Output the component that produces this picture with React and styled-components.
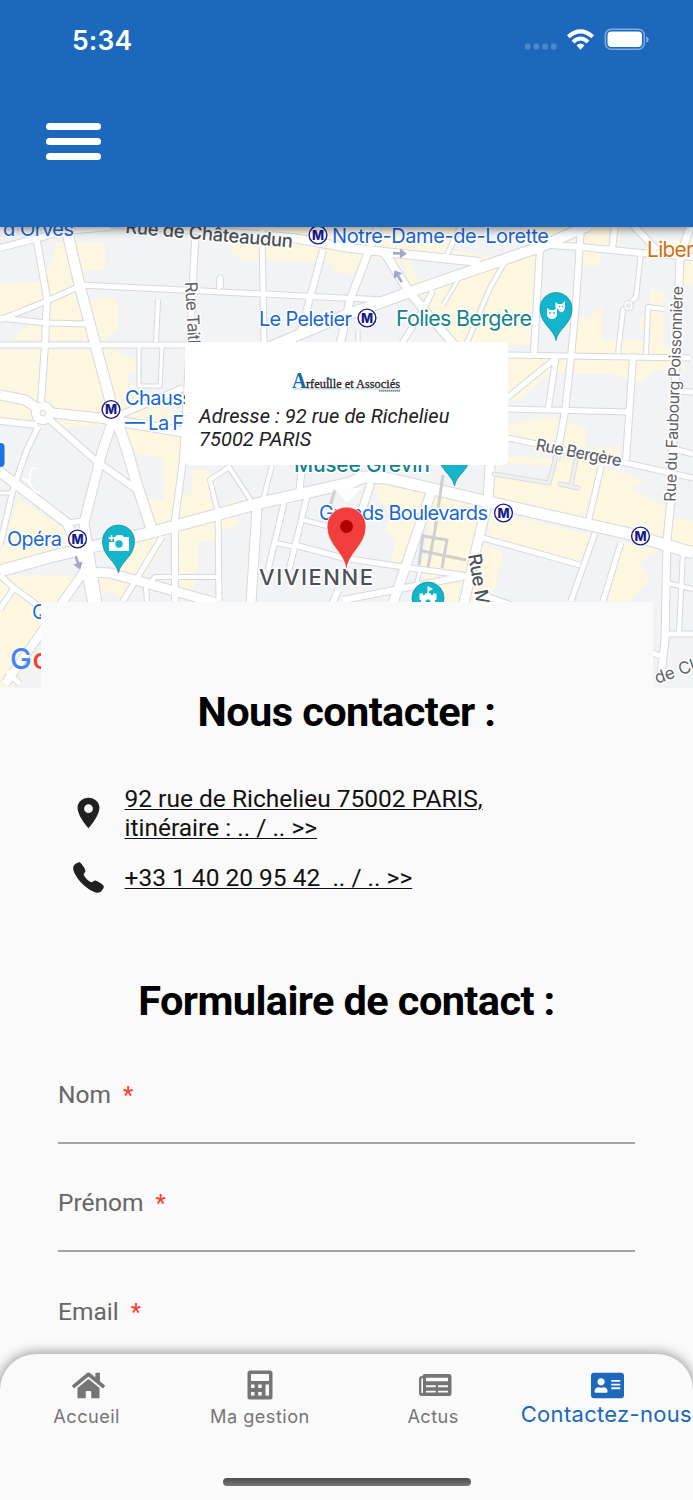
import styled, { createGlobalStyle } from "styled-components";
import { FaHome, FaCalculator, FaAddressCard } from "react-icons/fa";
import { IoLocationSharp, IoCall } from "react-icons/io5";

const GlobalStyle = createGlobalStyle`
  * {
    box-sizing: border-box;
  }
  body {
    margin: 0;
    background: #fafafa;
    font-family: Roboto, sans-serif;
  }
`;

const Screen = styled.div`
  display: flex;
  flex-direction: column;
  width: 693px;
  height: 1500px;
  overflow: hidden;
  background: #fafafa;
`;

const Header = styled.header`
  position: relative;
  z-index: 2;
  flex: none;
  height: 227px;
  background: #1b68bc;
  box-shadow: 0 2px 9px rgba(0, 0, 0, 0.5);
`;

const StatusBar = styled.div`
  display: flex;
  justify-content: space-between;
  align-items: center;
  height: 80px;
  padding: 0 44px 0 72px;
`;

const Clock = styled.span`
  font: 600 26.5px/32px Inter, sans-serif;
  letter-spacing: 0.2px;
  color: #fff;
`;

const MenuButton = styled.button`
  display: flex;
  flex-direction: column;
  gap: 8px;
  margin: 43px 0 0 46px;
  padding: 0;
  border: 0;
  background: none;
`;

const MenuBar = styled.span`
  width: 55px;
  height: 7px;
  border-radius: 4px;
  background: #fff;
`;

const Content = styled.main`
  flex: 1;
  min-height: 0;
  overflow: hidden;
`;

const MapBox = styled.section`
  position: relative;
  height: 461px;

  & > svg {
    display: block;
  }
`;

const Callout = styled.div`
  position: absolute;
  left: 185px;
  top: 115px;
  width: 323px;
  height: 123px;
  padding: 28px 14px 0;
  border-radius: 5px;
  background: #fff;
`;

const CalloutLogo = styled.div`
  display: flex;
  justify-content: center;
  height: 35px;
`;

const CalloutText = styled.p`
  margin: 0;
  font-size: 20px;
  font-style: italic;
  line-height: 23px;
  letter-spacing: 0.06px;
  color: #212121;
`;

const Sheet = styled.section`
  position: relative;
  width: 612px;
  margin: -86px auto 0 41px;
  padding: 85px 18px 0 17px;
  background: #fafafa;
`;

const Title = styled.h2`
  margin: 0;
  font-size: 41.5px;
  font-weight: 700;
  line-height: 50px;
  letter-spacing: -0.6px;
  text-align: center;
  color: #000;
`;

const ContactList = styled.div`
  display: flex;
  flex-direction: column;
  gap: 18px;
  margin: 46.5px 0 80.5px;
`;

const ContactRow = styled.div`
  display: flex;
  align-items: center;
  gap: 18.5px;
  padding-left: 13px;
  color: #212121;
`;

const ContactIcon = styled.span`
  display: flex;
  justify-content: center;
  flex: none;
  width: 35px;
`;

const ContactLink = styled.a`
  font-size: 24.5px;
  line-height: 29.3px;
  color: #111;
  white-space: pre;
  text-decoration: underline;
  text-decoration-thickness: 1.3px;
  text-underline-offset: 2px;
`;

const Fields = styled.div`
  padding-top: 54px;
`;

const Field = styled.label`
  display: block;
  height: 64px;
  margin-bottom: 44.5px;
  border-bottom: 2px solid #a3a3a3;
  font-size: 24.5px;
  line-height: 30px;
  color: #666;
`;

const Required = styled.span`
  margin-left: 12px;
  font-size: 23px;
  font-weight: 500;
  color: #f44336;
`;

const TabBar = styled.nav`
  position: relative;
  z-index: 2;
  flex: none;
  height: 146px;
  border-radius: 36px 36px 0 0;
  background: #fafafa;
  box-shadow: 0 0 13px rgba(0, 0, 0, 0.5);
`;

const Tabs = styled.div`
  display: grid;
  grid-template-columns: repeat(4, 173.25px);
  height: 124px;
  padding-top: 15px;
`;

const Tab = styled.div`
  display: flex;
  flex-direction: column;
  align-items: center;
  color: ${(p) => (p.$active ? "#1b68bc" : "#757575")};
  font: 375 ${(p) => (p.$active ? 22 : 18.2)}px/26px Inter, sans-serif;
  letter-spacing: ${(p) => (p.$active ? "0.3px" : "0.45px")};
  white-space: nowrap;
`;

const TabIcon = styled.span`
  display: flex;
  align-items: center;
  height: 32px;
  padding-left: ${(p) => p.$shift || 0}px;
`;

const TabLabel = styled.span`
  margin-top: ${(p) => (p.$active ? "-0.5px" : "2px")};
`;

const HomeIndicator = styled.div`
  width: 248px;
  height: 8px;
  margin: 0 auto;
  border-radius: 4px;
  background: linear-gradient(#4d4d4d, #777);
`;

const blocks = [
  "M55 243H105V270H84L88 300 113 297 117 303V330L105 340H12L20 332 35 322V300L0 320V284L40 282 52 262Z",
  "M0 350H118V352L135 360V372H129L128 385H138V400L183 415V460L140 455 110 425 60 427 0 422Z",
  "M231 227H350L365 246V265L350 274 333 271V262L240 260V255H231Z",
  "M345 227H620V245L600 247V265L583 267V246H540L530 330V345H460L420 300 410 293 405 265 343 250Z",
  "M340 305L350 312 341 323Z",
  "M18 498L67 530 78 555 0 572V553Z",
  "M0 575L80 576 38 628 14 688H0Z",
  "M145 452H183L175 515 157 527 148 500 164 500 163 460Z",
  "M130 545L165 534 160 552 125 601 110 590 92 600 82 575 120 568Z",
  "M193 470L200 467 216 477V510L235 498 238 525 217 532V542H198V560L192 600H176V575H192V590H176V515L182 495H191Z",
  "M508 355H540V352H571L575 320 590 317 603 305V340H640L684 353V370H655L640 383 612 374H548L520 400H508Z",
  "M508 425L548 417 586 427V450L600 447H620V460L600 455 560 450 508 438Z",
  "M377 483L431 495 400 570 391 562 396 540 386 530 393 510 377 500Z",
  "M432 495L485 506 465 601H412L425 555Z",
  "M491 455L605 462 588 520 490 500Z",
  "M604 468L645 480 630 490 668 508V518L693 521V548L588 523Z",
  "M484 510L660 550 640 562 649 580 630 601H608L621 541 595 535 583 570 530 550 490 535Z",
  "M480 542L503 553 495 590 480 601H467Z",
  "M670 240H693V285H679Z",
  "M650 289L663 292V353H648V330H640V318H650Z",
];

// grey courtyards cut out of the yellow blocks
const greyBlocks = [
  "M0 320L47 301 45 318 30 322 0 318Z",
  "M410 257L470 264 440 278 416 279Z",
  "M455 227H520L540 240 500 258 450 250Z",
  "M540 249H573V320L538 328Z",
  "M414 300L432 294 425 310 412 345H405Z",
  "M500 462L550 466 548 482 495 476Z",
  "M490 540L580 567 568 601H500L480 594 495 590 503 553Z",
];

const roads = [
  [4, "M158 300L156 342"],
  [3, "M139 347V386H160L162 347"],
  [3.5, "M221 288V279Q221 275 219 279V289"],
  [6, "M36 236L47 298 45 345 41 402"],
  [6, "M0 248L38 238 65 231 110 227"],
  [5, "M80 285L183 290 343 298 386 300"],
  [5, "M0 320L47 301 80 286"],
  [5, "M0 318L47 323 88 324"],
  [5, "M0 345H190"],
  [6, "M195 240L190 345 183 460 175 520V601"],
  [5, "M262 230L264 342"],
  [6, "M323 250L300 335"],
  [7, "M378 227L350 300 340 345"],
  [5, "M433 290L423 310 401 345"],
  [3, "M458 280L443 305"],
  [4, "M506 260L490 288 466 345"],
  [4, "M460 227L446 257"],
  [3, "M358 330V345"],
  [6, "M540 247L534 353"],
  [6, "M581 227L576 303 571 357 565 412 556 460"],
  [6, "M550 245L581 247 641 253 693 257"],
  [6, "M615 225L612 249"],
  [6, "M630 222L657 250"],
  [4, "M641 253L636 297 623 310 618 353"],
  [7, "M690 227L680 257 671 500 667 540 665 640 660 682"],
  [5, "M508 355L690 358"],
  [5, "M556 358L508 397"],
  [5, "M556 358L548 410"],
  [5, "M508 409L630 412"],
  [6, "M633 358L626 460"],
  [4, "M646 354L648 307 664 309"],
  [5, "M508 438L626 463 693 478"],
  [5, "M676 391L693 392"],
  [5, "M674 449L693 454"],
  [6, "M0 421L37 425"],
  [5, "M38 427L26 452 13 490 0 545"],
  [6, "M50 420L95 460 137 490"],
  [6, "M120 415L183 388"],
  [3, "M0 493H13"],
  [5, "M67 523L82 521"],
  [5, "M0 575L14 588 40 607"],
  [5, "M14 588L0 609"],
  [5, "M162 537L123 601"],
  [4, "M217 577H155L146 588 147 601"],
  [5, "M218 513L219 601"],
  [4, "M218 513L210 480 229 467 252 502"],
  [4, "M272 465L263 500"],
  [6, "M302 465L299 495"],
  [5, "M284 503L268 570"],
  [5, "M307 497L289 570"],
  [4, "M304 520L350 532"],
  [4, "M276 543L295 547"],
  [5, "M295 545L343 558 410 568 463 575"],
  [6, "M343 600L466 576"],
  [6, "M338 590L332 605"],
  [7, "M371 483L362 510"],
  [3, "M420 570L415 590"],
  [5, "M601 467L588 523"],
  [5, "M595 533L571 601"],
  [5, "M621 543L603 601"],
  [5, "M483 538L580 565"],
  [5, "M483 595L515 606"],
  [4, "M667 583L693 589"],
  [4, "M683 552L679 632"],
  [5, "M665 634H693"],
  [5, "M650 652L662 657"],
  [5, "M7 672L20 684"],
  [10, "M65 222L80 287 112 407 127 450 138 488 153 533"],
  [8, "M100 222L293 238 350 248 393 253 480 262"],
  [10, "M590 225L540 247 410 292 343 316 270 347"],
  [8, "M383 250L410 293 456 347"],
  [9, "M0 395L25 400 43 412 100 418 183 432"],
  [9, "M113 420L102 452 84 523 97 603"],
  [9, "M0 472L67 523 85 565 93 603"],
  [8, "M83 573L5 684"],
  [9, "M80 572L110 573 217 603"],
  [9, "M257 508L251 603"],
  [9, "M431 493L393 603"],
  [9, "M491 450L488 500 476 550 464 603"],
  [11, "M0 571L50 557 153 532 260 503 350 483 363 477 386 478 493 503 626 533 693 553"],
];

const passages = [
  "M443 475L435 530 428 567",
  "M423 536L447 540 442 568",
  "M423 534L419 565",
  "M422 551L466 560",
  "M335 490L330 506",
];

// faint service lanes
const lanes = [
  "M494 474L549 483 556 456",
  "M576 460L571 485M560 484L578 488",
];

const stations = [
  [318, 235],
  [367, 318],
  [111, 409.5],
  [77.5, 539],
  [503.5, 513],
  [640.5, 536],
];

const labels = [
  { x: 3, y: 235.5, w: 71, text: "d'Orves", color: "#1967d2" },
  { x: 332, y: 242.5, w: 217, text: "Notre-Dame-de-Lorette", color: "#1967d2" },
  { x: 259, y: 326, w: 93, text: "Le Peletier", color: "#1967d2" },
  { x: 396, y: 325.5, w: 136, text: "Folies Bergère", color: "#12838a", size: 21.5 },
  { x: 125, y: 404.5, w: 90, text: "Chaussée", color: "#1967d2" },
  { x: 125, y: 429.5, w: 59, text: "— La F", color: "#1967d2" },
  { x: 7, y: 546, w: 55, text: "Opéra", color: "#1967d2" },
  { x: 294, y: 471.5, w: 136, text: "Musée Grévin", color: "#12838a", size: 21, weight: 500 },
  { x: 319, y: 520, w: 169, text: "Grands Boulevards", color: "#1967d2" },
  { x: 647, y: 257, w: 47, text: "Liber", color: "#d56e0c", size: 21 },
  { x: 32, y: 619, w: 60, text: "Quatre", color: "#1967d2" },
  { x: 259, y: 585, w: 114, text: "VIVIENNE", color: "#4b5157", size: 22, weight: 500 },
  { x: 125, y: 233, w: 168, text: "Rue de Châteaudun", color: "#4b5157", rotate: 5, size: 18.5, weight: 500 },
  { x: 185, y: 282, w: 78, text: "Rue Taitbo", color: "#5f6368", rotate: 87, size: 17 },
  { x: 535, y: 450, w: 87, text: "Rue Bergère", color: "#5f6368", rotate: 11, size: 16.5, weight: 500 },
  { x: 675.5, y: 502, w: 216, text: "Rue du Faubourg Poissonnière", color: "#5f6368", rotate: -88, size: 16 },
  { x: 468, y: 555, w: 80, text: "Rue Mont", color: "#4b5157", rotate: 80, size: 18.5, weight: 500 },
  { x: 657, y: 684, w: 68, text: "de Cléry", color: "#5f6368", rotate: -20, size: 17 },
];

const PIN = "M0 24C-2 12 -16 8 -16 -8A16 16 0 0 1 16 -8C16 8 2 12 0 24Z";
const ARROW = "M-7 -1.3H0V-5L7 0 0 5V1.3H-7Z";

const Label = ({ x, y, w, text, color, size = 20, weight = 400, rotate = 0 }) => (
  <text
    x={x}
    y={y}
    textLength={w}
    fontFamily="Inter, sans-serif"
    fontSize={size}
    fontWeight={weight}
    fill={color}
    stroke="#fff"
    strokeWidth="3"
    strokeLinejoin="round"
    paintOrder="stroke"
    transform={`rotate(${rotate} ${x} ${y})`}
  >
    {text}
  </text>
);

const Station = ({ x, y }) => (
  <g transform={`translate(${x} ${y})`}>
    <circle r="10.5" fill="#fff" />
    <circle r="8.9" fill="#fff" stroke="#1a1a8c" strokeWidth="1.4" />
    <text
      y="4.7"
      textAnchor="middle"
      fontFamily="Inter, sans-serif"
      fontSize="12.8"
      fontWeight="800"
      fill="#1a1a8c"
    >
      M
    </text>
  </g>
);

const StreetMap = () => (
  <svg width="693" height="461" viewBox="0 227 693 461">
    <rect y="227" width="693" height="461" fill="#f1f3f4" />
    {blocks.map((d) => (
      <path key={d} d={d} fill="#fef7e0" />
    ))}
    {greyBlocks.map((d) => (
      <path key={d} d={d} fill="#f1f3f4" />
    ))}
    <g fill="none" stroke="#d6d8df" strokeLinejoin="round">
      {roads.map(([w, d]) => (
        <path key={d} d={d} strokeWidth={w + 2} />
      ))}
      <circle cx="43" cy="413" r="7" strokeWidth="10" />
    </g>
    <g fill="none" stroke="#fff" strokeLinejoin="round">
      {roads.map(([w, d]) => (
        <path key={d} d={d} strokeWidth={w} />
      ))}
      <circle cx="43" cy="413" r="7" strokeWidth="8" />
    </g>
    <circle cx="43" cy="413" r="3" fill="#fef7e0" stroke="#d9dbe0" />
    <rect x="624" y="301" width="9" height="9" rx="2" fill="#fff" stroke="#d9dbe0" />
    <rect x="627" y="304" width="3" height="3" fill="#fef7e0" stroke="#d9dbe0" />
    <g fill="none" stroke="#cfcfcf" strokeWidth="3">
      {passages.map((d) => (
        <path key={d} d={d} />
      ))}
    </g>
    <g fill="none" strokeLinecap="round">
      {lanes.map((d) => (
        <path key={d} d={d} stroke="#d9dbe0" strokeWidth="5" />
      ))}
      {lanes.map((d) => (
        <path key={d} d={d} stroke="#eff0f2" strokeWidth="3" />
      ))}
    </g>
    <path
      d="M36 468L31 469 29 482 34 491 40 493M22 478L29 481"
      fill="none"
      stroke="#fff"
      strokeWidth="2"
    />
    {/* one-way arrows */}
    <g fill="#a3a9cb">
      <path d={ARROW} transform="translate(400 253.5) rotate(3)" />
      <path d={ARROW} transform="translate(398 276) rotate(-122)" />
      <path d={ARROW} transform="translate(78 563) rotate(72)" />
    </g>
    <rect x="-15" y="443" width="19.5" height="24" rx="4" fill="#1a73e8" />
    {labels.map((l) => (
      <Label key={l.text} {...l} />
    ))}
    {stations.map(([x, y]) => (
      <Station key={x} x={x} y={y} />
    ))}
    <g fill="#12b5cb" stroke="#12939f" strokeWidth="0.8">
      <path d={PIN} transform="translate(556 316.5)" />
      <path d={PIN} transform="translate(118.5 549)" />
      <path d={PIN} transform="translate(454.5 462)" />
      <circle cx="428" cy="598" r="16" />
    </g>
    {/* theatre masks */}
    <g fill="#fff">
      <path d="M555.5 302L558 304H562L565 301V308Q564 313 560 312L558 309 555.5 308Z" />
      <path d="M547 308L550 310H554L557 308V315Q556 319 552 319T547 315Z" />
    </g>
    <g fill="#12b5cb">
      <circle cx="550" cy="313" r="0.9" />
      <circle cx="554" cy="313" r="0.9" />
      <circle cx="559.5" cy="306.5" r="0.8" />
      <circle cx="562.5" cy="306.5" r="0.8" />
    </g>
    {/* camera */}
    <path d="M109 542V551H129V537H124L122 535H117L115 537H114V542Z" fill="#fff" />
    <circle cx="119" cy="544" r="3.7" fill="#12b5cb" />
    <path d="M111.5 535V541M108.5 538H114.5" stroke="#fff" strokeWidth="1.5" />
    {/* museum tower */}
    <path
      d="M427.5 586L433 589 429 591V593.5H431V595H433V593.5H436.5V600H435V605H421V600H419.5V593.5H423V595H425V593.5H427.5Z"
      fill="#fff"
    />
    <path d="M425.5 605V601Q428 597.5 430.5 601V605Z" fill="#12b5cb" />
    <text x="10" y="669" fontFamily="Inter, sans-serif" fontSize="29" fontWeight="500">
      <tspan fill="#4285f4">G</tspan>
      <tspan x="32.5" fill="#ea4335">o</tspan>
    </text>
    <path d="M333 488H362L347 503Z" fill="#fff" opacity="0.85" />
    {/* selected place */}
    <path
      d="M346.5 571C345 552 327 546 327 526.5A19.5 19.5 0 0 1 366 526.5C366 546 348 552 346.5 571Z"
      fill="#f33e3e"
      stroke="#fff"
      strokeWidth="0.7"
    />
    <circle cx="346.5" cy="526.5" r="6.5" fill="#b20000" />
  </svg>
);

const Logo = () => (
  <svg width="110" height="24" viewBox="0 0 110 24">
    <text
      x="0"
      y="18"
      fontFamily="Liberation Serif, serif"
      fontSize="23"
      fontWeight="700"
      fill="#1268a8"
      textLength="14.5"
      lengthAdjust="spacingAndGlyphs"
    >
      A
    </text>
    <text
      x="14"
      y="18"
      fontFamily="Liberation Serif, serif"
      fontSize="13.5"
      fill="#222"
      stroke="#222"
      strokeWidth="0.3"
      textLength="94"
      lengthAdjust="spacingAndGlyphs"
    >
      rfeuille et Associés
    </text>
    <path d="M1 19H109" stroke="#8fc3cf" strokeWidth="0.7" />
    <path d="M87 20.8H108" stroke="#555" strokeWidth="1.2" strokeDasharray="1.5 0.5" />
    <circle cx="36" cy="8.5" r="1.5" fill="#1268a8" />
  </svg>
);

const SystemIcons = () => (
  <svg width="124" height="24" viewBox="525 28 124 24">
    <g fill="#fff" opacity="0.22">
      {[525, 533.7, 542.3, 551].map((x) => (
        <rect key={x} x={x} y="43.5" width="5.5" height="6" rx="1.7" />
      ))}
    </g>
    <g fill="none" stroke="#fff" strokeWidth="4">
      <path d="M568.3 36.8Q580.5 26 592.7 36.8" />
      <path d="M573 42Q580.5 35 588 42" />
    </g>
    <path d="M576.5 45.2Q580.5 41.8 584.5 45.2L580.5 49.7Z" fill="#fff" />
    <rect x="605.3" y="29.3" width="39" height="20" rx="6" fill="none" stroke="#fff" strokeOpacity="0.45" strokeWidth="1.5" />
    <rect x="607.5" y="31.5" width="34.5" height="15.5" rx="4" fill="#fff" />
    <path d="M646.3 36.5Q648.7 37.5 648.7 39.5T646.3 43Z" fill="#fff" opacity="0.5" />
  </svg>
);

const NewsIcon = () => (
  <svg width="34" height="24" viewBox="0 0 34 24">
    <path
      fillRule="evenodd"
      d="M6.5 1H31Q33.5 1 33.5 3.5V20.5Q33.5 23 31 23H4Q1 23 1 20V6Q1 3 4 3H4.5Q4.5 1 6.5 1ZM3.3 6V19.5Q4.2 21 5 19.5V5.3Q3.3 5 3.3 6ZM8 4.7V8.3H30V4.700ZM8 12.200V14.200H17.800V12.200ZM20 12.200V14.200H30V12.200ZM8 17.700V19.600H17.800V17.700ZM20 17.700V19.600H30V17.700Z"
      fill="currentColor"
    />
  </svg>
);

const CalculatorIcon = () => (
  <svg width="26" height="30" viewBox="0 0 26 30">
    <path
      fillRule="evenodd"
      d="M3 0.500H23Q25.500 0.500 25.500 3V27Q25.500 29.500 23 29.500H3Q0.500 29.500 0.500 27V3Q0.500 0.500 3 0.500ZM4 4V11H22V4ZM4 14.500V18H7.500V14.500ZM11.200 14.500V18H14.700V14.500ZM4 22V25.500H7.500V22ZM11.200 22V25.500H14.700V22ZM18.500 14.500V25.500H22V14.500Z"
      fill="currentColor"
    />
  </svg>
);

const tabs = [
  { label: "Accueil", icon: <FaHome size={33} />, shift: 3 },
  { label: "Ma gestion", icon: <CalculatorIcon /> },
  { label: "Actus", icon: <NewsIcon />, shift: 3 },
  { label: "Contactez-nous", icon: <FaAddressCard size={33} />, shift: 3, active: true },
];

const App = () => {
  return (
    <Screen>
      <GlobalStyle />
      <Header>
        <StatusBar>
          <Clock>5:34</Clock>
          <SystemIcons />
        </StatusBar>
        <MenuButton aria-label="Menu">
          <MenuBar />
          <MenuBar />
          <MenuBar />
        </MenuButton>
      </Header>

      <Content>
        <MapBox>
          <StreetMap />
          <Callout>
            <CalloutLogo>
              <Logo />
            </CalloutLogo>
            <CalloutText>
              Adresse : 92 rue de Richelieu
              <br />
              75002 PARIS
            </CalloutText>
          </Callout>
        </MapBox>

        <Sheet>
          <Title>Nous contacter :</Title>
          <ContactList>
            <ContactRow>
              <ContactIcon>
                <IoLocationSharp size={38} />
              </ContactIcon>
              <ContactLink>
                {"92 rue de Richelieu 75002 PARIS,\nitinéraire : .. / .. >>"}
              </ContactLink>
            </ContactRow>
            <ContactRow>
              <ContactIcon>
                <IoCall size={35} />
              </ContactIcon>
              <ContactLink>{"+33 1 40 20 95 42  .. / .. >>"}</ContactLink>
            </ContactRow>
          </ContactList>

          <Title>Formulaire de contact :</Title>
          <Fields>
            {["Nom", "Prénom", "Email"].map((name) => (
              <Field key={name}>
                {name}
                <Required>*</Required>
              </Field>
            ))}
          </Fields>
        </Sheet>
      </Content>

      <TabBar>
        <Tabs>
          {tabs.map(({ label, icon, shift, active }) => (
            <Tab key={label} $active={active}>
              <TabIcon $shift={shift}>{icon}</TabIcon>
              <TabLabel $active={active}>{label}</TabLabel>
            </Tab>
          ))}
        </Tabs>
        <HomeIndicator />
      </TabBar>
    </Screen>
  );
};

export default App;
